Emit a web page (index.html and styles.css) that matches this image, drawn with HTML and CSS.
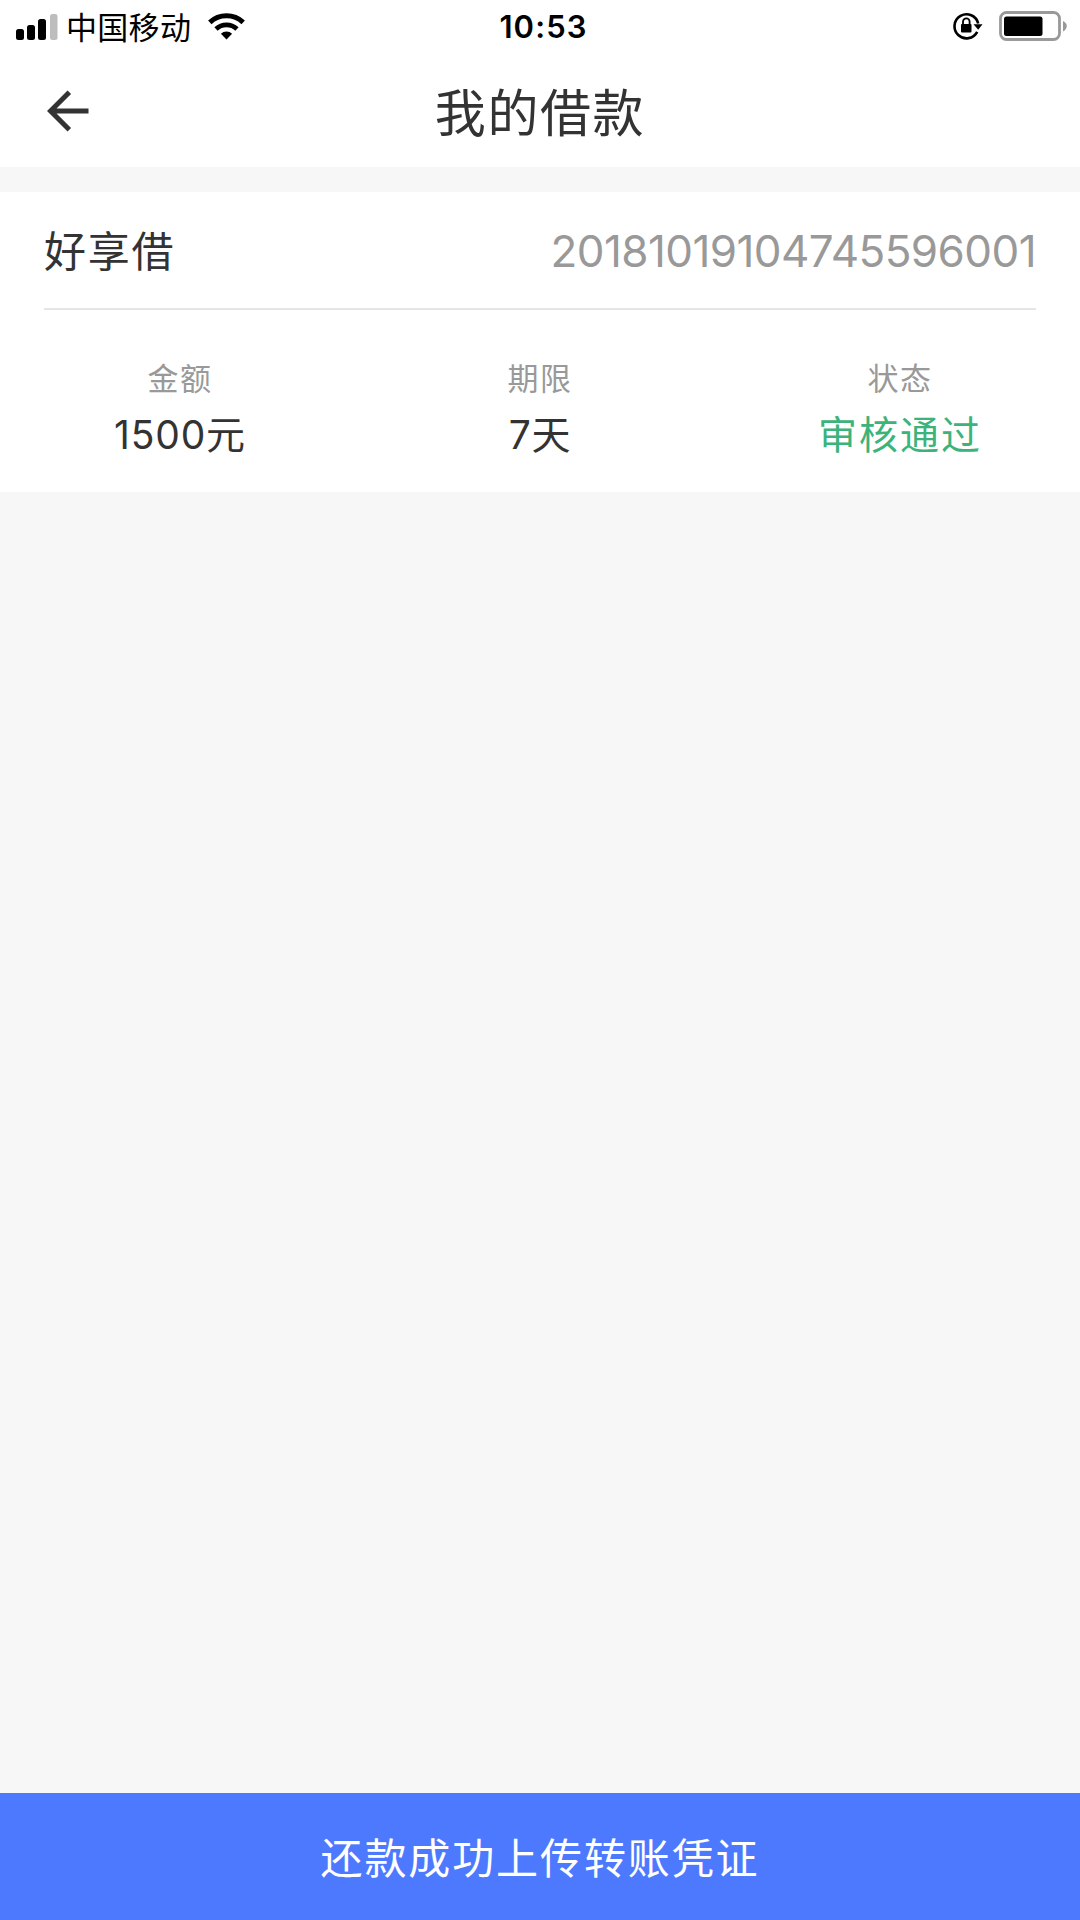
FILE: index.html
```html
<!DOCTYPE html>
<html lang="zh-CN">
<head>
<meta charset="utf-8">
<title>我的借款</title>
<link rel="stylesheet" href="styles.css">
</head>
<body>
<div class="app">
  <header class="top">
    <div class="status-bar">
      <div class="status-left">
        <svg class="signal" width="42" height="26" viewBox="0 0 42 26">
          <rect x="0" y="15" width="8" height="11" rx="2.5"/>
          <rect x="11" y="11" width="8" height="15" rx="2.5"/>
          <rect x="22" y="5" width="8" height="21" rx="2.5"/>
          <rect x="34" y="0" width="7.500" height="26" rx="2.5" fill="#bdbdbd"/>
        </svg>
        <span class="carrier">中国移动</span>
        <svg class="wifi" width="37" height="27" viewBox="0 0 37 27">
          <path d="M1.800 9.300A24.500 24.500 0 0 1 35.200 9.300" fill="none" stroke="#000" stroke-width="5"/>
          <path d="M8 16A15.500 15.500 0 0 1 29 16" fill="none" stroke="#000" stroke-width="4.800"/>
          <path d="M12.900 20.800A8 8 0 0 1 24.100 20.800L18.500 26.500Z"/>
        </svg>
      </div>
      <span class="time">10:53</span>
      <div class="status-right">
        <svg class="lock" width="30" height="28" viewBox="0 0 30 28">
          <path d="M24.2 19.8A12 12 0 1 1 25.2 11.5" fill="none" stroke="#000" stroke-width="2.6"/>
          <path d="M20.5 12.3H29.5L25.2 17.7Z"/>
          <rect x="8" y="12" width="10.500" height="8.600" rx="1"/>
          <path d="M10 13V9.6a3.3 3.3 0 0 1 6.6 0V13" fill="none" stroke="#000" stroke-width="1.8"/>
        </svg>
        <svg class="battery" width="69" height="30" viewBox="0 0 69 30">
          <rect x="1.5" y="1.5" width="59" height="27" rx="6" fill="none" stroke="#999" stroke-width="2.8"/>
          <rect x="5" y="5.500" width="38.5" height="19.500" rx="2.5"/>
          <path d="M64 10C69 12 69 18 64 20.500Z" fill="#999"/>
        </svg>
      </div>
    </div>
    <div class="nav">
      <svg class="back" width="42" height="42" viewBox="0 0 42 42">
        <path d="M41.500 21H4M22.300 2.200L3.500 21L22.300 39.800" fill="none" stroke="#333" stroke-width="5"/>
      </svg>
      <h1 class="title">我的借款</h1>
      <span></span>
    </div>
  </header>
  <main class="content">
    <section class="card">
      <div class="card-head">
        <span class="product">好享借</span>
        <span class="order">20181019104745596001</span>
      </div>
      <div class="facts">
        <div class="fact"><span class="label">金额</span><span class="value">1500元</span></div>
        <div class="fact"><span class="label">期限</span><span class="value">7天</span></div>
        <div class="fact"><span class="label">状态</span><span class="value passed">审核通过</span></div>
      </div>
    </section>
  </main>
  <button class="submit">还款成功上传转账凭证</button>
</div>
</body>
</html>
```
FILE: styles.css
```css
* { box-sizing: border-box; }
body {
  margin: 0;
  font-family: Inter, "Noto Sans CJK SC", sans-serif;
  color: #333;
}
.app {
  height: 1920px;
  display: flex;
  flex-direction: column;
  background: #f7f7f7;
}
.top { height: 167px; background: #fff; }
.status-bar {
  height: 54px;
  padding: 0 12px 0 16px;
  display: grid;
  grid-template-columns: 1fr auto 1fr;
  align-items: center;
  color: #000;
}
.status-left, .status-right { display: flex; align-items: center; }
.status-right { justify-content: flex-end; gap: 16px; padding-bottom: 2px; }
.signal { margin-right: 8px; }
.carrier { font-size: 31px; line-height: 46px; letter-spacing: 0.3px; padding-top: 1px; }
.wifi { margin-left: 17px; margin-bottom: 1px; }
.time { font-size: 31px; font-weight: 600; letter-spacing: 1.1px; line-height: 54px; padding-left: 3px; }
.nav {
  height: 113px;
  padding: 0 47px;
  display: grid;
  grid-template-columns: 1fr auto 1fr;
  align-items: center;
}
.title {
  margin: 0;
  padding-top: 6px;
  font-size: 51px;
  line-height: 74px;
  font-weight: 400;
  letter-spacing: 1.6px;
}
.content { flex: 1; padding-top: 25px; }
.card { height: 300px; padding: 0 44px; background: #fff; }
.card-head {
  height: 118px;
  display: flex;
  justify-content: space-between;
  align-items: center;
  border-bottom: 2px solid #e5e5e5;
}
.product { font-size: 42px; letter-spacing: 1.8px; padding-bottom: 3px; }
.order { font-size: 44px; letter-spacing: -0.57px; color: #999; padding-top: 1px; }
.facts {
  display: grid;
  grid-template-columns: repeat(3, 1fr);
  margin: 0 -44px;
  padding-top: 45px;
}
.fact { display: flex; flex-direction: column; align-items: center; }
.label { font-size: 31px; line-height: 48px; letter-spacing: 1.5px; color: #999; }
.value { font-size: 39px; line-height: 64px; letter-spacing: 0.8px; }
.passed { color: #3cb37a; letter-spacing: 2px; }
.submit {
  height: 127px;
  border: 0;
  padding: 0 0 3px;
  background: #4d79ff;
  color: #fff;
  font-family: inherit;
  font-size: 42px;
  letter-spacing: 1.9px;
}
```
